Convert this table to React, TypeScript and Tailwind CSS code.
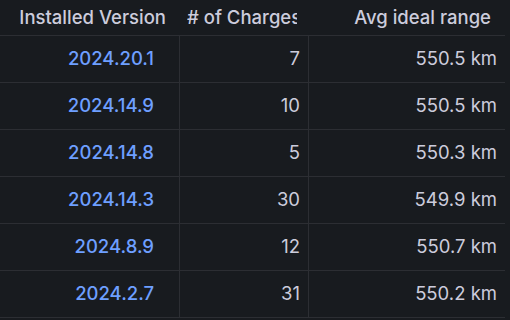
const rows = [
  { version: '2024.20.1', charges: 7, range: '550.5 km' },
  { version: '2024.14.9', charges: 10, range: '550.5 km' },
  { version: '2024.14.8', charges: 5, range: '550.3 km' },
  { version: '2024.14.3', charges: 30, range: '549.9 km' },
  { version: '2024.8.9', charges: 12, range: '550.7 km' },
  { version: '2024.2.7', charges: 31, range: '550.2 km' },
];

const App = () => {
  return (
    <div className="w-[510px] h-[320px] overflow-hidden bg-[#181b1f] font-['Inter',sans-serif] text-[#ccccdc]">
      <div className="w-[505px]">
        <div className="flex h-[36px] border-b border-[#2c2e33] text-[18.5px] font-medium">
          <div className="w-[180px] flex items-center justify-end pr-[14px] whitespace-nowrap">
            Installed Version
          </div>
          <div className="w-[129px] flex items-center pl-[7px] pr-[12px] overflow-hidden whitespace-nowrap">
            <span className="min-w-0 overflow-hidden">{'# of Charges'}</span>
          </div>
          <div className="flex-1 flex items-center justify-end pr-[14px] whitespace-nowrap">
            Avg ideal range
          </div>
        </div>
        {rows.map((r) => (
          <div key={r.version} className="flex h-[47px] border-b border-[#2c2e33] text-[18.5px]">
            <div className="w-[180px] flex items-center justify-end pr-[25px] border-r border-[#2c2e33] text-[#6e9fff] font-medium">
              {r.version}
            </div>
            <div className="w-[129px] flex items-center justify-end pr-[8px] border-r border-[#2c2e33]">
              {r.charges}
            </div>
            <div className="flex-1 flex items-center justify-end pr-[8px]">
              {r.range}
            </div>
          </div>
        ))}
      </div>
    </div>
  );
};

export default App;
